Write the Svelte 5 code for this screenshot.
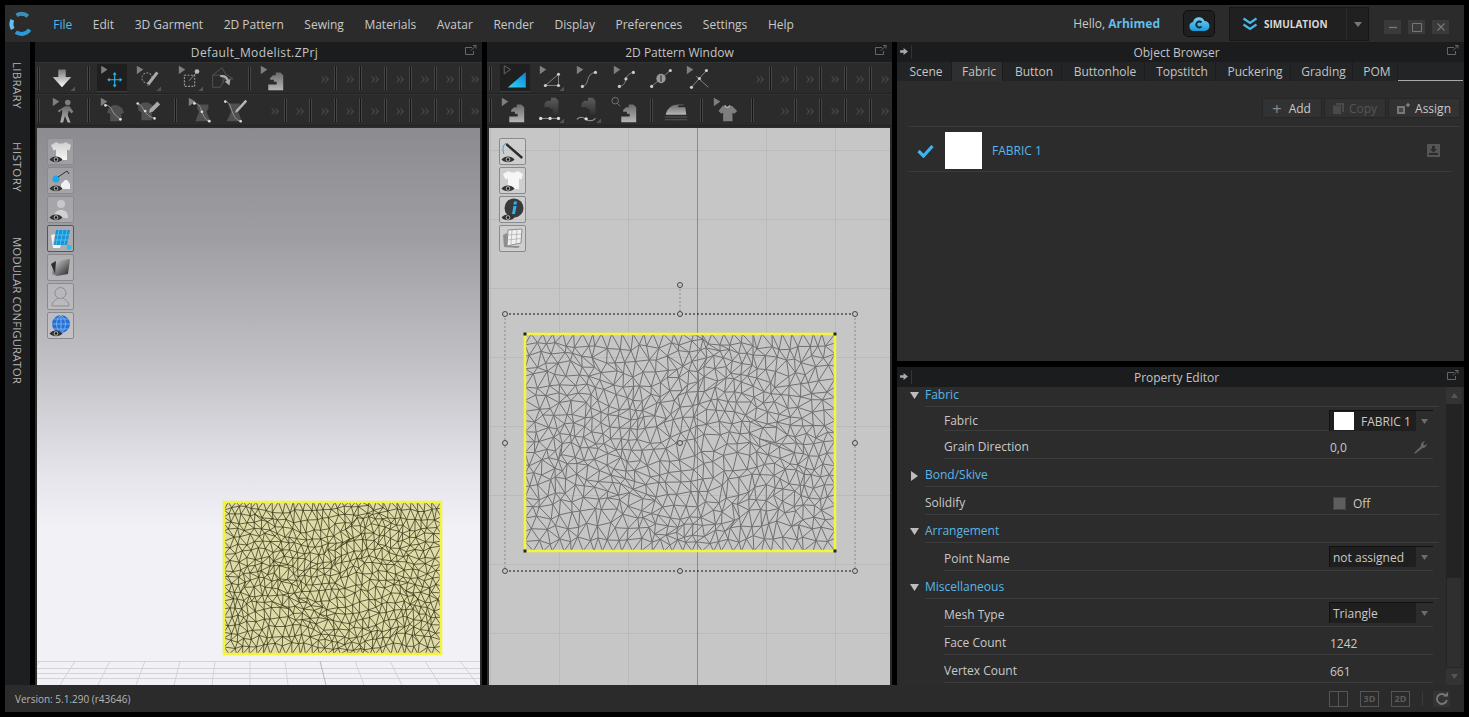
<script>
  const MENUS = ['File','Edit','3D Garment','2D Pattern','Sewing','Materials','Avatar','Render','Display','Preferences','Settings','Help'];
  const TABS = [['Scene',55],['Fabric',51],['Button',59],['Buttonhole',83],['Topstitch',71],['Puckering',75],['Grading',62],['POM',45]];

  const PROPS = [
    { head: true, open: true, label: 'Fabric', first: true },
    { label: 'Fabric', combo: 'FABRIC 1', swatch: true, h: 24 },
    { label: 'Grain Direction', value: '0,0', wrench: true },
    { head: true, open: false, label: 'Bond/Skive' },
    { plain: true, label: 'Solidify', check: 'Off' },
    { head: true, open: true, label: 'Arrangement' },
    { label: 'Point Name', combo: 'not assigned' },
    { head: true, open: true, label: 'Miscellaneous' },
    { label: 'Mesh Type', combo: 'Triangle' },
    { label: 'Face Count', value: '1242' },
    { label: 'Vertex Count', value: '661' },
  ];

  // » and separator pairs run out to the panel edge
  function chevrons(sep, last) {
    const out = [];
    for (let s = sep; s <= last; s += 25) {
      out.push(['chev', s - 10], ['sep', s]);
    }
    out.push(['chev', last + 15]);
    return out;
  }

  // items are [kind, centre x in page coords, active?]
  function place(items, originX) {
    let end = originX;
    return items.map(([kind, x, on]) => {
      const w = kind === 'sep' ? 3 : kind === 'chev' ? 10 : 30;
      const ml = Math.round(x - w / 2 - end);
      end += ml + w;
      return { kind, ml, on };
    });
  }

  const BARS_3D = [
    place([['sep',38],['arrow',62],['sep',88],['move',112,true],['pen',148],['box',190],['cube',222],['sep',249],['sew',272],...chevrons(335,460)], 35),
    place([['sep',38],['walk',64],['sep',88],['shirtcurve',112],['shirtpen',148],['sep',175],['shirtcurve2',200],['shirtpen2',236],...chevrons(285,460)], 35),
  ];
  const BARS_2D = [
    place([['sep',490],['tri',515,true],['poly',551],['curve',588],['curvept',625],['circlept',661],['crosspt',698],...chevrons(770,870)], 487),
    place([['sep',490],['sew',513],['sew2',551],['sew3',588],['sew4',625],['sep',651],['iron',676],['sep',701],['tee',725],['sep',752],...chevrons(795,870)], 487),
  ];

  const VIEW_3D = ['v-shirt','v-seam','v-avatar','v-grid','v-tex','v-ghost','v-globe'];
  const VIEW_2D = ['v-needle','v-shirt2','v-info','v-pattern'];

  // jittered triangle mesh for the fabric piece
  function buildMesh(w, h, cols, rows, seed) {
    let s = seed;
    const rnd = () => {
      s = (s * 16807) % 2147483647;
      return s / 2147483647;
    };
    const cw = w / cols;
    const ch = h / rows;
    const pts = [];
    for (let r = 0; r <= rows; r++) {
      const line = [];
      for (let c = 0; c <= cols; c++) {
        const edgeX = c === 0 || c === cols;
        const edgeY = r === 0 || r === rows;
        const u = c / cols;
        const v = r / rows;
        // slow warp so rows and columns don't read as straight lines
        const fade = Math.min(1, Math.min(u, 1 - u, v, 1 - v) * 6);
        let x = c * cw + Math.sin(v * 9 + u * 4 + seed) * cw * 0.9 * fade;
        let y = r * ch + Math.sin(u * 11 - v * 3 + seed) * ch * 0.9 * fade;
        if (!edgeX) x += (r % 2 ? 0.25 : -0.25) * cw + (rnd() - 0.5) * cw * (edgeY ? 0.3 : 0.6);
        if (!edgeY) y += (rnd() - 0.5) * ch * (edgeX ? 0.4 : 0.6);
        line.push([+x.toFixed(1), +y.toFixed(1)]);
      }
      pts.push(line);
    }
    const dist = (a, b) => Math.hypot(a[0] - b[0], a[1] - b[1]);
    let d = '';
    const seg = (a, b) => { d += `M${a[0]} ${a[1]}L${b[0]} ${b[1]}`; };
    for (let r = 0; r <= rows; r++) {
      for (let c = 0; c <= cols; c++) {
        if (c < cols) seg(pts[r][c], pts[r][c + 1]);
        if (r < rows) seg(pts[r][c], pts[r + 1][c]);
        if (c < cols && r < rows) {
          // always take the shorter diagonal of the cell
          if (dist(pts[r][c], pts[r + 1][c + 1]) < dist(pts[r][c + 1], pts[r + 1][c])) seg(pts[r][c], pts[r + 1][c + 1]);
          else seg(pts[r][c + 1], pts[r + 1][c]);
        }
      }
    }
    return d;
  }

  const MESH_2D = buildMesh(310, 217, 31, 20, 4711);
  const MESH_3D = buildMesh(217, 152, 31, 20, 9203);

  const HANDLES = [[16,186],[191,186],[366,186],[16,315],[191,315],[366,315],[16,443],[191,443],[366,443],[191,157]];
  const FLOOR_X = Array.from({ length: 15 }, (_, i) => i - 7);
</script>

<svg class="defs" width="0" height="0" aria-hidden="true">
  <defs>
    <linearGradient id="g-arrow" x1="0" y1="0" x2="0" y2="1"><stop offset="0" stop-color="#777"/><stop offset="1" stop-color="#fff"/></linearGradient>
    <linearGradient id="g-metal" x1="0" y1="0" x2="0" y2="1"><stop offset="0" stop-color="#6a6a6a"/><stop offset="1" stop-color="#b5b5b5"/></linearGradient>
    <linearGradient id="g-dim" x1="0" y1="0" x2="0" y2="1"><stop offset="0" stop-color="#5c5c5c"/><stop offset="1" stop-color="#303030"/></linearGradient>
    <linearGradient id="g-cyan" x1="0" y1="1" x2="1" y2="0"><stop offset="0" stop-color="#2fd6f2"/><stop offset="1" stop-color="#0f7fd8"/></linearGradient>
    <linearGradient id="g-cloud" x1="0" y1="0" x2="0" y2="1"><stop offset="0" stop-color="#6fd3f7"/><stop offset="1" stop-color="#1c9ad6"/></linearGradient>
    <linearGradient id="g-shirt" x1="0" y1="0" x2="0" y2="1"><stop offset="0" stop-color="#cfcfcf"/><stop offset="1" stop-color="#f6f6f6"/></linearGradient>
    <linearGradient id="g-tex" x1="0" y1="0" x2="1" y2="1"><stop offset="0" stop-color="#dcdcdc"/><stop offset="1" stop-color="#222"/></linearGradient>
    <symbol id="cur" viewBox="0 0 30 30"><path d="M3 2v9l7-5z" fill="#7f7f7f"/></symbol>
    <symbol id="corner" viewBox="0 0 30 30"><path d="M29 29h-5l5-5z" fill="#555"/></symbol>
    <symbol id="eye" viewBox="0 0 25 25"><path d="M1.500 20.500c3-4 10-4 13 0c-3 3.500-10 3.500-13 0z" fill="#333"/><circle cx="8" cy="20.500" r="2.200" fill="#bbb"/><circle cx="8" cy="20.500" r="1.300" fill="#111"/></symbol>

    <symbol id="i-arrow" viewBox="0 0 30 30"><path d="M11 6h8v8h6L15 25 5 14h6z" fill="url(#g-arrow)"/><use href="#corner"/></symbol>
    <symbol id="i-move" viewBox="0 0 30 30"><use href="#cur"/><path d="M18 11v13M11.500 17.500h13" stroke="#2fb6e6" stroke-width="1.300"/><path d="M18 9l-2.200 3h4.400zM18 26l-2.200-3h4.400zM9.500 17.500l3-2.200v4.400zM26.500 17.500l-3-2.200v4.400z" fill="#2fb6e6"/></symbol>
    <symbol id="i-pen" viewBox="0 0 30 30"><use href="#cur"/><circle cx="14" cy="15" r="5.500" fill="none" stroke="#888" stroke-width="1.100" stroke-dasharray="2 1.500"/><path d="M15 22L25 9" stroke="#aaa" stroke-width="3.200"/><path d="M14 24l.5-3 2 1.500z" fill="#666"/><use href="#corner"/></symbol>
    <symbol id="i-box" viewBox="0 0 30 30"><use href="#cur"/><rect x="9" y="12" width="11" height="12" fill="none" stroke="#999" stroke-width="1.200" stroke-dasharray="2 1.500"/><path d="M14 18l8-9" stroke="#888"/><circle cx="22.500" cy="8" r="2.500" fill="#bbb"/><use href="#corner"/></symbol>
    <symbol id="i-cube" viewBox="0 0 30 30"><path d="M5 12l10-8 4 7 8 5-9 0-5 9-8 0zM5 12l11 0M16 12v9" fill="none" stroke="#555"/><path d="M13 12c5-1 8 1 9 5l2-1-1 7-5-4 2-1c-1-3-4-4-7-4z" fill="#aaa"/></symbol>
    <symbol id="i-sew" viewBox="0 0 30 30"><use href="#cur"/><path d="M13 15l3-3h3v-3h5l3 3v16H11v-6h9v-3h-3v-2h-4z" fill="url(#g-metal)"/></symbol>
    <symbol id="i-sew4" viewBox="0 0 30 30"><circle cx="4.500" cy="5" r="3.500" fill="none" stroke="#777"/><path d="M7 8l3 3" stroke="#777"/><path d="M13 15l3-3h3v-3h5l3 3v16H11v-6h9v-3h-3v-2h-4z" fill="url(#g-metal)"/></symbol>
    <symbol id="i-sew2" viewBox="0 0 30 30"><path d="M8 8l3-3h4V2h5l3 3v15h-6v-6h-3v-2H8z" fill="url(#g-dim)"/><path d="M4 24h19" stroke="#999"/><circle cx="4" cy="24" r="1.800" fill="#ddd"/><circle cx="14" cy="24" r="1.800" fill="#ddd"/><circle cx="23" cy="24" r="1.800" fill="#ddd"/><use href="#corner"/></symbol>
    <symbol id="i-sew3" viewBox="0 0 30 30"><path d="M8 8l3-3h4V2h5l3 3v15h-6v-6h-3v-2H8z" fill="url(#g-dim)"/><path d="M3 25c4-4 7-2 10 0s7 2 10-1" fill="none" stroke="#999" stroke-width="1.100"/><circle cx="13" cy="24.500" r="1.800" fill="#ddd"/><use href="#corner"/></symbol>
    <symbol id="i-walk" viewBox="0 0 30 30"><use href="#cur"/><circle cx="19" cy="7" r="3" fill="#7e7e7e"/><path d="M16 11h5l4 6-2 1.500-3-3-1 5 3 8h-3l-3-7-2 7h-3l2-10 0-4-3 3-2-1.500z" fill="url(#g-metal)"/></symbol>
    <symbol id="i-tee" viewBox="0 0 30 30"><use href="#cur"/><path d="M12 11l3-1c1 2.500 4 2.500 5 0l3 1 5 5-3 3-2-1v9H13v-9l-2 1-3-3z" fill="#7e7e7e"/><path d="M15 10c1 3 4 3 5 0" fill="none" stroke="#bbb" stroke-width="1.300"/></symbol>
    <symbol id="i-shirtcurve" viewBox="0 0 30 30"><use href="#cur"/><path d="M11 13l5-3h5l5 3 2 5-3 1v8H13v-8l-3-1z" fill="#505050"/><path d="M8 10c5 0 6 3 8 7s5 5 8 8" fill="none" stroke="#999"/><circle cx="8" cy="10" r="1.500" fill="#ddd"/><circle cx="24" cy="25" r="1.500" fill="#ddd"/></symbol>
    <symbol id="i-shirtpen" viewBox="0 0 30 30"><path d="M4 10l6-3h5l5 3 2 6-3 1v9H8v-9l-3-1z" fill="#505050"/><path d="M4 8c4 1 5 5 7 8s6 7 11 8" fill="none" stroke="#999"/><circle cx="4" cy="8" r="1.400" fill="#ddd"/><circle cx="12" cy="16" r="1.400" fill="#ddd"/><circle cx="22" cy="24" r="1.400" fill="#ddd"/><path d="M17 14l8-8 3 3-8 8-4 1z" fill="#aaa"/></symbol>
    <symbol id="i-shirtcurve2" viewBox="0 0 30 30"><use href="#cur"/><path d="M12 9h12v5l-2 3 2 5 2 5H10l2-5 2-5-2-3z" fill="#505050"/><path d="M9 8c6 0 6 4 8 9s4 9 8 10" fill="none" stroke="#999"/><circle cx="9" cy="8" r="1.500" fill="#ddd"/><circle cx="17" cy="17" r="1.400" fill="#ddd"/><circle cx="25" cy="27" r="1.500" fill="#ddd"/></symbol>
    <symbol id="i-shirtpen2" viewBox="0 0 30 30"><path d="M6 8h13v5l-2 3 2 5 2 6H5l3-6 2-5-2-3z" fill="#505050"/><path d="M3 6c6 0 6 6 8 11s4 9 9 10" fill="none" stroke="#999"/><circle cx="3.500" cy="6" r="1.400" fill="#ddd"/><circle cx="20" cy="27" r="1.400" fill="#ddd"/><path d="M15 15l10-11 2 2-10 11-3 1z" fill="#b5b5b5"/></symbol>
    <symbol id="i-tri" viewBox="0 0 30 30"><path d="M3 2v9l7-5z" fill="none" stroke="#6c6c6c"/><path d="M7 26L27 9v17z" fill="url(#g-cyan)"/></symbol>
    <symbol id="i-poly" viewBox="0 0 30 30"><use href="#cur"/><path d="M9 23h14V11z" fill="none" stroke="#888"/><circle cx="9" cy="23" r="1.700" fill="#ccc"/><circle cx="23" cy="23" r="1.700" fill="#ccc"/><circle cx="23" cy="11" r="1.700" fill="#ccc"/><use href="#corner"/></symbol>
    <symbol id="i-curve" viewBox="0 0 30 30"><use href="#cur"/><path d="M9 24c8-1 3-14 14-15" fill="none" stroke="#888"/><circle cx="9" cy="24" r="1.700" fill="#ccc"/><circle cx="23" cy="9" r="1.700" fill="#ccc"/></symbol>
    <symbol id="i-curvept" viewBox="0 0 30 30"><use href="#cur"/><path d="M9 24c6-1 6-5 7-8s3-6 8-7" fill="none" stroke="#888"/><circle cx="9" cy="24" r="1.700" fill="#ccc"/><circle cx="16" cy="16" r="1.700" fill="#ccc"/><circle cx="24" cy="9" r="1.700" fill="#ccc"/></symbol>
    <symbol id="i-circlept" viewBox="0 0 30 30"><path d="M5 24L25 7" stroke="#888"/><circle cx="5" cy="24" r="1.700" fill="#ccc"/><circle cx="25" cy="7" r="1.700" fill="#ccc"/><circle cx="15" cy="15.500" r="5" fill="#999"/><path d="M15 12v7" stroke="#444" stroke-width="1.500"/></symbol>
    <symbol id="i-crosspt" viewBox="0 0 30 30"><use href="#cur"/><path d="M8 25L24 7M13 13l13 12" stroke="#888"/><circle cx="8" cy="25" r="1.700" fill="#ccc"/><circle cx="24" cy="7" r="1.700" fill="#ccc"/><circle cx="16.500" cy="15.500" r="1.700" fill="#ccc"/></symbol>
    <symbol id="i-iron" viewBox="0 0 30 30"><path d="M4 20c1-6 6-11 13-11h6v1h-5l-1 2h8l1 8z" fill="url(#g-metal)"/><path d="M3 22h24v1H3zM3 25h24v1H3z" fill="#555"/></symbol>

    <symbol id="v-shirt" viewBox="0 0 25 25"><path d="M8.500 3L3 6l2.500 5.500 2.500-1V21h11V10.500l2.500 1L23 6l-5.500-3c-1.500 2-7.500 2-9 0z" fill="url(#g-shirt)"/><use href="#eye"/></symbol>
    <symbol id="v-shirt2" viewBox="0 0 25 25"><path d="M8.500 3L3 6l2.500 5.500 2.500-1V21h11V10.500l2.500 1L23 6l-5.500-3c-1.500 2-7.500 2-9 0z" fill="#f6f6f6"/><use href="#eye"/></symbol>
    <symbol id="v-seam" viewBox="0 0 25 25"><circle cx="8" cy="11" r="3.500" fill="#1fa7e8"/><path d="M10 9l9-6 2 3" fill="none" stroke="#333"/><path d="M13 21v-5l4-4h2l3 4v5z" fill="#f0f0f0"/><use href="#eye"/></symbol>
    <symbol id="v-avatar" viewBox="0 0 25 25"><circle cx="13" cy="7" r="4" fill="#c8c8c8"/><path d="M6 21c0-6 3-8 7-8s7 2 7 8z" fill="#d0d0d0"/><use href="#eye"/></symbol>
    <symbol id="v-grid" viewBox="0 0 25 25"><path d="M8 4h14l-3 15H6z" fill="#1a93d6"/><path d="M11 4L8 19M15 4l-3 15M19 4l-3 15M7.500 9h14M6.800 14h13.500" stroke="#5fd0f2" stroke-width=".7"/><path d="M3 9l4-1-2 11h8l-1 3H5z" fill="#f2f2f2"/><rect x="19" y="19" width="4.500" height="4.500" fill="#27c0ee"/></symbol>
    <symbol id="v-tex" viewBox="0 0 25 25"><path d="M8 6l14-2-2 15-11 2-5-2 1-10z" fill="url(#g-tex)"/><path d="M3 9l5-3-1 13z" fill="#2e2e2e"/></symbol>
    <symbol id="v-ghost" viewBox="0 0 25 25"><circle cx="12.500" cy="9" r="5.500" fill="none" stroke="#8d8d90"/><path d="M4 22c0-5 4-6 6-8M21 22c0-5-4-6-6-8M4 22h17" fill="none" stroke="#8d8d90"/></symbol>
    <symbol id="v-globe" viewBox="0 0 25 25"><circle cx="13" cy="11" r="9" fill="#2a6fd6"/><path d="M4 11h18M13 2v18M6 6h14M6 16h14M13 2c-6 5-6 13 0 18M13 2c6 5 6 13 0 18" fill="none" stroke="#8fc6f0" stroke-width=".7"/><use href="#eye"/></symbol>
    <symbol id="v-needle" viewBox="0 0 25 25"><path d="M7 4l16 14-1.500 2L5.500 6z" fill="#2b2b2b"/><path d="M6 4C3 6 2 10 4 15" fill="none" stroke="#3a9fe0"/><use href="#eye"/></symbol>
    <symbol id="v-info" viewBox="0 0 25 25"><circle cx="14" cy="11" r="9.500" fill="#3a3a3c"/><path d="M13.500 9h3l-1.500 8h-3zM14 4.500h3l-.5 3h-3z" fill="#2cb5ee"/><use href="#eye"/></symbol>
    <symbol id="v-pattern" viewBox="0 0 25 25"><path d="M8 4l14-1-1 14-14 3z" fill="#f0f0f0" stroke="#8c8c8c"/><path d="M12 4l-1 15M17 3.500l-1 15M7.800 9l14-1M7.400 14l14-1.500" stroke="#aaa" stroke-width=".7"/><path d="M7 7L3 9l1 12 14 1 2-2-13 0z" fill="#8e8e8e"/></symbol>
  </defs>
</svg>

<div class="shell">
  <header class="topbar">
    <svg class="logo" width="30" height="30" viewBox="0 0 30 30">
      <g fill="none" stroke-width="4">
        <path d="M9.500 6.300A10 10 0 0 1 20.900 7.300" stroke="#3d8fb8"/>
        <path d="M5.400 10.800A10 10 0 0 0 5.800 20" stroke="#63c2ec"/>
        <path d="M8.800 23.200A10 10 0 0 0 22.700 20.700" stroke="#2b9ad6"/>
      </g>
    </svg>
    <nav class="menu">
      {#each MENUS as m, i}
        <span class="menu-item" class:current={i === 0}>{m}</span>
      {/each}
    </nav>
    <div class="account">
      <span class="hello">Hello, <b>Arhimed</b></span>
      <button class="cloud" type="button" aria-label="Cloud">
        <svg width="22" height="16" viewBox="0 0 22 16">
          <path d="M6 15a4.500 4.500 0 0 1-1-8.900A6 6 0 0 1 16.500 5a5 5 0 0 1 0 10z" fill="url(#g-cloud)"/>
          <path d="M13.500 6.500a3 3 0 1 0 0 4" fill="none" stroke="#14222c" stroke-width="1.800"/>
        </svg>
      </button>
      <div class="sim">
        <svg width="16" height="14" viewBox="0 0 16 14"><path d="M1.500 1.500L8 6l6.500-4.500M1.500 7.500L8 12l6.500-4.500" fill="none" stroke="#48b7ea" stroke-width="2.200"/></svg>
        <span class="sim-label">SIMULATION</span>
        <span class="sim-caret"></span>
      </div>
      <div class="win">
        <span class="win-btn"><svg width="10" height="10" viewBox="0 0 10 10"><path d="M1 5.500h8" stroke="#777" stroke-width="1.300"/></svg></span>
        <span class="win-btn"><svg width="10" height="10" viewBox="0 0 10 10"><path d="M.5 1.500h9v8h-9z" fill="none" stroke="#777"/></svg></span>
        <span class="win-btn"><svg width="10" height="10" viewBox="0 0 10 10"><path d="M1.500 1.500l7 7M8.500 1.500l-7 7" stroke="#777" stroke-width="1.300"/></svg></span>
      </div>
    </div>
  </header>

  <div class="work">
    <aside class="rail">
      <span class="rail-item lib">LIBRARY</span>
      <span class="rail-item his">HISTORY</span>
      <span class="rail-item">MODULAR CONFIGURATOR</span>
    </aside>

    <section class="view view-3d">
      <div class="title">
        <span class="file-name">Default_Modelist.ZPrj</span>
        <svg class="popout" width="12" height="10" viewBox="0 0 12 10"><path d="M7 2.500H.5v7h8V6M6 5.500L11 .5M8 .5h3v3" fill="none" stroke="#666"/></svg>
      </div>
      {#each BARS_3D as bar}
        <div class="bar">
          {#each bar as it}
            {#if it.kind === 'sep'}
              <span class="sep" style="margin-left:{it.ml}px"></span>
            {:else if it.kind === 'chev'}
              <span class="chev" style="margin-left:{it.ml}px">»</span>
            {:else}
              <svg class="tool" class:on={it.on} style="margin-left:{it.ml}px" viewBox="0 0 30 30"><use href="#i-{it.kind}"/></svg>
            {/if}
          {/each}
        </div>
      {/each}
      <div class="canvas canvas-3d">
        <div class="view-btns">
          {#each VIEW_3D as v, i}
            <span class="vbtn" class:pressed={i === 3}><svg width="25" height="25" viewBox="0 0 25 25"><use href="#{v}"/></svg></span>
          {/each}
        </div>
        <svg class="mesh3d" width="223" height="158" viewBox="-3 -3 223 158">
          <rect width="217" height="152" fill="#dedba8"/>
          <path d="{MESH_3D}" fill="none" stroke="#2c2a0e" stroke-width=".7"/>
          <rect width="217" height="152" fill="none" stroke="#f4f43a" stroke-width="2.500"/>
        </svg>
        <svg class="floor" width="443" height="24" viewBox="0 0 443 24">
          <path d="M0 .5H443M0 7.500H443M0 12.500H443M0 17.500H443" stroke="#d3d3d6"/>
          {#each FLOOR_X as n}
            <path d="M{213 + n * 35} 0L{213 + n * 38} 24" stroke={n === 2 ? '#b4b4b8' : '#d3d3d6'}/>
          {/each}
        </svg>
      </div>
    </section>

    <section class="view view-2d">
      <div class="title title-2d">
        <span>2D Pattern Window</span>
        <svg class="popout" width="12" height="10" viewBox="0 0 12 10"><path d="M7 2.500H.5v7h8V6M6 5.500L11 .5M8 .5h3v3" fill="none" stroke="#666"/></svg>
      </div>
      {#each BARS_2D as bar}
        <div class="bar">
          {#each bar as it}
            {#if it.kind === 'sep'}
              <span class="sep" style="margin-left:{it.ml}px"></span>
            {:else if it.kind === 'chev'}
              <span class="chev" style="margin-left:{it.ml}px">»</span>
            {:else}
              <svg class="tool" class:on={it.on} style="margin-left:{it.ml}px" viewBox="0 0 30 30"><use href="#i-{it.kind}"/></svg>
            {/if}
          {/each}
        </div>
      {/each}
      <div class="canvas canvas-2d">
        <div class="view-btns">
          {#each VIEW_2D as v}
            <span class="vbtn"><svg width="25" height="25" viewBox="0 0 25 25"><use href="#{v}"/></svg></span>
          {/each}
        </div>
        <svg class="stage" width="401" height="557" viewBox="0 0 401 557">
          <path d="M208.500 0V557" stroke="#8b8b8b"/>
          <path d="M191 157V186M16 186V443M366 186V443" fill="none" stroke="#8a8a8a" stroke-dasharray="2 2"/>
          <path d="M16 186H366M16 443H366" fill="none" stroke="#111" stroke-dasharray="2 2"/>
          <g transform="translate(36 206)">
            <path d="{MESH_2D}" fill="none" stroke="#707070" stroke-width="1"/>
            <rect width="310" height="217" fill="none" stroke="#f5f53c" stroke-width="2.500"/>
            <path d="M-1.500-1.500h3v3h-3zM308.500-1.500h3v3h-3zM-1.500 215.500h3v3h-3zM308.500 215.500h3v3h-3z" fill="#222"/>
          </g>
          {#each HANDLES as [x, y]}
            <circle cx={x} cy={y} r="2.500" fill="#c6c6c6" stroke="#444"/>
          {/each}
        </svg>
      </div>
    </section>

    <div class="side">
      <section class="dock browser">
        <div class="title dock-title">
          <svg class="pin" width="8" height="7" viewBox="0 0 9 8"><path d="M0 2.500h4V0l5 4-5 4V5.500H0z" fill="#aaa"/></svg>
          <span>Object Browser</span>
          <svg class="popout" width="12" height="10" viewBox="0 0 12 10"><path d="M7 2.500H.5v7h8V6M6 5.500L11 .5M8 .5h3v3" fill="none" stroke="#666"/></svg>
        </div>
        <div class="tabs">
          {#each TABS as [name, w], i}
            <span class="tab" class:active={i === 1} style="width:{w}px">{name}</span>
          {/each}
          <span class="tab-rest"></span>
        </div>
        <div class="actions">
          <button class="act add" type="button"><span class="plus">+</span>Add</button>
          <button class="act off" type="button">
            <svg width="11" height="11" viewBox="0 0 11 11"><path d="M3 0h8v9H9V2H3zM0 2.500h8V11H0z" fill="#4a4a4a"/></svg>Copy
          </button>
          <button class="act" type="button">
            <svg width="13" height="11" viewBox="0 0 13 11"><path d="M0 3h8v8H0z" fill="#777"/><path d="M2 5h4v4H2z" fill="#444"/><path d="M11 0v4M9 2h4" stroke="#999"/></svg>Assign
          </button>
        </div>
        <div class="fabric-row">
          <svg width="17" height="14" viewBox="0 0 17 14"><path d="M1.500 7l5 5L15.500 2" fill="none" stroke="#3fb4ec" stroke-width="3.200"/></svg>
          <span class="swatch"></span>
          <span class="fabric-name">FABRIC 1</span>
          <span class="import"><svg width="9" height="9" viewBox="0 0 9 9"><path d="M3 0h3v3h2L4.500 6.500 1 3h2zM0 7h9v2H0z" fill="#2c2c2c"/></svg></span>
        </div>
      </section>

      <section class="dock props">
        <div class="title dock-title">
          <svg class="pin" width="8" height="7" viewBox="0 0 9 8"><path d="M0 2.500h4V0l5 4-5 4V5.500H0z" fill="#aaa"/></svg>
          <span>Property Editor</span>
          <svg class="popout" width="12" height="10" viewBox="0 0 12 10"><path d="M7 2.500H.5v7h8V6M6 5.500L11 .5M8 .5h3v3" fill="none" stroke="#666"/></svg>
        </div>
        <div class="prop-body">
          <div class="prop-list">
            {#each PROPS as p}
              <div class="prow" class:sub={!p.head && !p.plain} class:first={p.first} class:short={p.h === 24}>
                <span class="twist">
                  {#if p.head}
                    {#if p.open}
                      <svg width="9" height="7" viewBox="0 0 9 7"><path d="M0 0h9L4.500 7z" fill="#bdbdbd"/></svg>
                    {:else}
                      <svg width="7" height="10" viewBox="0 0 7 10"><path d="M0 0l7 5-7 5z" fill="#bdbdbd"/></svg>
                    {/if}
                  {/if}
                </span>
                <div class="pline">
                  <span class="plabel" class:blue={p.head}>{p.label}</span>
                  {#if p.combo}
                    <span class="combo">
                      {#if p.swatch}<i class="combo-swatch"></i>{/if}
                      <span class="combo-text" class:after-swatch={p.swatch}>{p.combo}</span>
                      <span class="combo-arrow"><svg width="7" height="5" viewBox="0 0 7 5"><path d="M0 0h7L3.500 5z" fill="#6c6c6c"/></svg></span>
                    </span>
                  {:else if p.check}
                    <span class="pval check"><i class="box"></i>{p.check}</span>
                  {:else if p.value}
                    <span class="pval">
                      {p.value}
                      {#if p.wrench}
                        <svg class="wrench" width="14" height="14" viewBox="0 0 14 14"><path d="M1 13l7-7c-.5-2 .5-4 4-5l-2 3 2 1.500 1.500-2c.5 3-1.500 4.500-4 4.500L2.500 13.500z" fill="#666"/></svg>
                      {/if}
                    </span>
                  {/if}
                </div>
              </div>
            {/each}
          </div>
          <div class="scroll">
            <span class="sc-btn"><svg width="7" height="5" viewBox="0 0 7 5"><path d="M0 5h7L3.500 0z" fill="#555"/></svg></span>
            <span class="sc-thumb"></span>
            <span class="sc-track"></span>
            <span class="sc-btn"><svg width="7" height="5" viewBox="0 0 7 5"><path d="M0 0h7L3.500 5z" fill="#555"/></svg></span>
          </div>
        </div>
      </section>
    </div>
  </div>

  <footer class="status">
    <span class="version">Version: 5.1.290 (r43646)</span>
    <div class="status-icons">
      <span class="st split"></span>
      <span class="st">3D</span>
      <span class="st">2D</span>
      <span class="st-sep"></span>
      <span class="st-refresh"><svg width="14" height="14" viewBox="0 0 14 14"><path d="M11 4a5 5 0 1 0 .8 4" fill="none" stroke="#777" stroke-width="2"/><path d="M8 4.500h5V0z" fill="#777"/></svg></span>
    </div>
  </footer>
</div>

<style>
  :global(body) {
    margin: 0;
    background: #000;
  }

  .defs { position: absolute; }

  .shell {
    width: 1459px;
    height: 707px;
    padding: 5px;
    background: #000;
    display: flex;
    flex-direction: column;
    font-family: "Open Sans", "Noto Sans", sans-serif;
    font-size: 12px;
    color: #c9c9c9;
  }

  /* top bar */
  .topbar {
    height: 37px;
    background: #2b2b2b;
    display: flex;
    align-items: center;
    flex-shrink: 0;
  }
  .logo { margin-left: 2px; margin-top: 1px; flex-shrink: 0; }
  .menu { display: flex; margin-left: 6px; margin-top: 1px; }
  .menu-item { padding: 0 10.27px; white-space: nowrap; }
  .menu-item.current { color: #55b6e6; }

  .account { margin-left: auto; display: flex; align-items: center; }
  .hello { margin-right: 23px; color: #c9c9c9; }
  .hello b { color: #62bdea; font-weight: 700; }
  .cloud {
    width: 32px;
    height: 27px;
    padding: 0;
    border: 1px solid #0e0e0e;
    border-radius: 5px;
    background: #1f1f1f;
    display: flex;
    align-items: center;
    justify-content: center;
  }
  .sim {
    width: 140px;
    height: 34px;
    margin-left: 14px;
    background: #202020;
    border: 1px solid #171717;
    box-sizing: border-box;
    display: flex;
    align-items: center;
    padding-left: 12px;
    position: relative;
  }
  .sim-label { font-size: 10px; font-weight: 700; color: #d8d8d8; margin-left: 6px; }
  .sim-caret {
    position: absolute;
    right: 6px;
    top: 14px;
    border: 4px solid transparent;
    border-top: 5px solid #777;
    border-bottom: 0;
  }
  .sim::after {
    content: '';
    position: absolute;
    right: 21px;
    top: 0;
    bottom: 0;
    width: 1px;
    background: #2c2c2c;
  }
  .win { display: flex; gap: 7px; margin-left: 15px; margin-right: 15px; margin-top: 6px; }
  .win-btn {
    width: 17px;
    height: 14px;
    background: #3a3a3a;
    display: flex;
    align-items: center;
    justify-content: center;
  }

  /* work area */
  .work { flex: 1; display: flex; min-height: 0; }

  .rail {
    width: 25px;
    margin-right: 5px;
    background: #1e1f20;
    display: flex;
    flex-direction: column;
    align-items: center;
    padding-top: 20px;
    box-sizing: border-box;
    flex-shrink: 0;
  }
  .rail-item {
    writing-mode: vertical-rl;
    font-size: 11.5px;
    color: #b5b5b5;
    white-space: nowrap;
  }
  .rail-item.lib { margin-bottom: 33px; letter-spacing: .3px; }
  .rail-item.his { margin-bottom: 45px; letter-spacing: .5px; }

  .view {
    display: flex;
    flex-direction: column;
    flex-shrink: 0;
    background: #2b2b2b;
  }
  .view-3d { width: 447px; margin-right: 5px; }
  .view-2d { width: 405px; margin-right: 5px; }

  .title {
    height: 20px;
    background: #1b1c1e;
    color: #c4c4c4;
    display: flex;
    align-items: center;
    justify-content: center;
    position: relative;
    flex-shrink: 0;
    padding-right: 8px;
  }
  .title-2d { padding-right: 20px; }
  .file-name { letter-spacing: .38px; }
  .popout { position: absolute; right: 5px; top: 3px; }

  .bar {
    height: 32px;
    box-sizing: border-box;
    border-bottom: 1px solid #222;
    border-top: 1px solid #333;
    display: flex;
    align-items: center;
    overflow: hidden;
    flex-shrink: 0;
  }
  .tool { width: 30px; height: 28px; flex-shrink: 0; }
  .tool.on { background: #1f1f1f; border-bottom: 1px solid #3c3c3c; height: 27px; }
  .sep {
    width: 1px;
    height: 24px;
    border-left: 1px solid #444;
    border-right: 1px solid #444;
    background: #171717;
    flex-shrink: 0;
  }
  .chev {
    width: 10px;
    font-family: "Liberation Serif", serif;
    font-size: 19px;
    line-height: 20px;
    color: #454545;
    text-align: center;
    flex-shrink: 0;
  }

  .canvas {
    flex: 1;
    margin: 2px 2px 0;
    position: relative;
    overflow: hidden;
  }
  .canvas-3d {
    background: linear-gradient(#8b8b90 0, #9e9ea3 20%, #c0c0c5 42%, #e4e4ea 62%, #f1f1f6 72%, #f2f2f6 100%);
  }
  .canvas-2d {
    background-color: #c6c6c6;
    background-image:
      linear-gradient(to right, #bababa 1px, transparent 1px),
      linear-gradient(to bottom, #bababa 1px, transparent 1px);
    background-size: 69px 69px;
    background-position: 1px 22px;
  }

  .view-btns {
    position: absolute;
    left: 10px;
    top: 10px;
    display: flex;
    flex-direction: column;
    gap: 2px;
    z-index: 2;
  }
  .vbtn {
    width: 25px;
    height: 25px;
    border: 1px solid #8a8a8e;
    border-radius: 2px;
    background: rgba(255, 255, 255, .14);
    display: block;
  }
  .vbtn svg { display: block; }
  .vbtn.pressed { border-color: #55555a; }

  .mesh3d { position: absolute; left: 184px; top: 371px; }
  .floor { position: absolute; left: 0; bottom: 0; }
  .stage { position: absolute; left: 0; top: 0; }

  /* right column */
  .side { width: 567px; display: flex; flex-direction: column; gap: 6px; }
  .dock { background: #2c2c2c; display: flex; flex-direction: column; }
  .browser { height: 319px; flex-shrink: 0; }
  .props { flex: 1; min-height: 0; }
  .pin { position: absolute; left: 3px; top: 6px; }
  .dock-title::after {
    content: '';
    position: absolute;
    left: 14px;
    top: 3px;
    bottom: 3px;
    width: 1px;
    background: #333;
  }

  .tabs { display: flex; height: 19px; background: #232425; flex-shrink: 0; }
  .tab {
    display: flex;
    align-items: center;
    justify-content: center;
    border-right: 1px solid #1c1c1c;
    box-sizing: border-box;
    padding-left: 4px;
    color: #c4c4c4;
  }
  .tab.active { background: #2f2f2f; }
  .tab-rest { flex: 1; margin-right: 1px; border-bottom: 1px solid #aaa; }

  .actions {
    height: 46px;
    margin: 0 4px 0 12px;
    border-bottom: 1px solid #3a3a3a;
    display: flex;
    justify-content: flex-end;
    align-items: flex-start;
    gap: 2px;
    padding: 17px 0 0 0;
    box-sizing: border-box;
  }
  .act {
    height: 20px;
    padding: 0 8px;
    border: 1px solid #262626;
    background: #323232;
    color: #c9c9c9;
    font: inherit;
    display: flex;
    align-items: center;
    gap: 5px;
  }
  .act.add { padding: 0 10px 0 9px; }
  .act.off { color: #555; }
  .plus { font-size: 17px; color: #888; margin-right: 2px; line-height: 1; }

  .fabric-row {
    height: 45px;
    box-sizing: border-box;
    margin: 0 13px 0 12px;
    border-bottom: 1px solid #3a3a3a;
    display: flex;
    align-items: center;
    padding: 3px 0 0 8px;
  }
  .swatch { width: 37px; height: 37px; background: #fff; margin-left: 11px; }
  .fabric-name { margin-left: 10px; color: #5ab7e8; }
  .import {
    margin-left: auto;
    margin-right: 11px;
    width: 13px;
    height: 13px;
    background: #555;
    display: flex;
    align-items: center;
    justify-content: center;
  }

  .prop-body { flex: 1; display: flex; min-height: 0; }
  .prop-list { flex: 1; overflow: hidden; }
  .prow { height: 28px; display: flex; }
  .prow.first { height: 20px; }
  .prow.short { height: 24px; }
  .twist { width: 28px; display: flex; align-items: center; justify-content: center; padding: 5px 1px 0 8px; box-sizing: border-box; flex-shrink: 0; }
  .prow.first .twist { padding-top: 0; padding-bottom: 4px; }
  .pline {
    flex: 1;
    display: flex;
    align-items: center;
    border-bottom: 1px solid #3c3c3c;
    margin-right: 7px;
    padding-top: 5px;
    position: relative;
  }
  .prow.first .pline { padding-top: 0; padding-bottom: 4px; }
  .prow.sub .pline { margin-left: 19px; margin-right: 13px; }
  .plabel { line-height: 14px; }
  .plabel.blue { color: #5ab7e8; }
  .pval { position: absolute; left: 386px; color: #c9c9c9; display: flex; align-items: center; }
  .wrench { position: absolute; left: 83px; top: 1px; }
  .pval.check { left: 408px; gap: 7px; }
  .box { width: 11px; height: 11px; background: #5e5e5e; border: 1px solid #444; display: block; }
  .combo {
    position: absolute;
    left: 385px;
    top: 3px;
    width: 104px;
    height: 21px;
    background: #1f1f1f;
    border-left: 1px solid #111;
    border-top: 1px solid #111;
    display: flex;
    align-items: center;
    box-sizing: border-box;
  }
  .combo-swatch { width: 20px; height: 18px; background: #fff; margin-left: 4px; display: block; flex-shrink: 0; }
  .combo-text { margin-left: 3px; color: #c9c9c9; white-space: nowrap; }
  .combo-text.after-swatch { margin-left: 7px; }
  .combo-arrow {
    margin-left: auto;
    width: 17px;
    height: 100%;
    background: #2c2c2c;
    display: flex;
    align-items: center;
    justify-content: center;
    flex-shrink: 0;
  }

  .scroll {
    width: 16px;
    margin-right: 2px;
    display: flex;
    flex-direction: column;
    flex-shrink: 0;
  }
  .sc-btn {
    height: 17px;
    background: #333;
    border-radius: 2px;
    display: flex;
    align-items: center;
    justify-content: center;
    flex-shrink: 0;
  }
  .sc-thumb { height: 173px; background: #232323; flex-shrink: 0; }
  .sc-track { flex: 1; background: #2f2f2f; border: 1px solid #252525; }

  /* status */
  .status {
    height: 27px;
    background: #2b2b2b;
    display: flex;
    align-items: center;
    padding-left: 10px;
    flex-shrink: 0;
  }
  .version { font-size: 10px; color: #b5b5b5; }
  .status-icons { margin-left: auto; margin-right: 14px; display: flex; align-items: center; gap: 12px; }
  .st {
    width: 17px;
    height: 14px;
    border: 1px solid #555;
    color: #5c5c5c;
    font-size: 9px;
    font-weight: 700;
    display: flex;
    align-items: center;
    justify-content: center;
  }
  .st.split { position: relative; }
  .st.split::after { content: ''; width: 1px; height: 100%; background: #555; }
  .st-sep { width: 1px; height: 14px; background: #3a3a3a; }
  .st-refresh { width: 17px; height: 16px; margin-left: -2px; background: #333; display: flex; align-items: center; justify-content: center; }
</style>
